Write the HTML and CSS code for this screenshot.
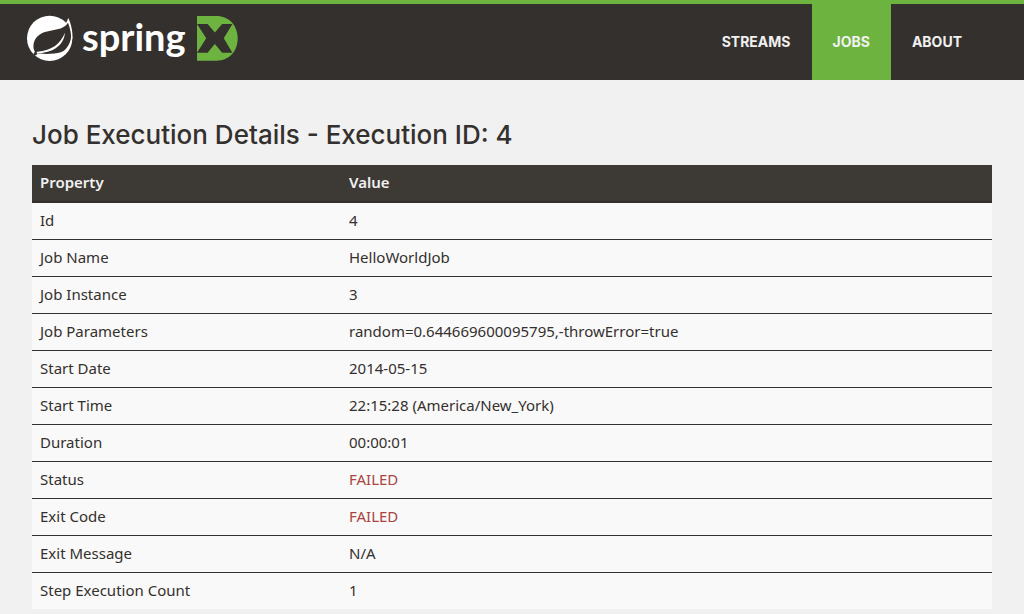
FILE: index.html
```html
<!DOCTYPE html>
<html lang="en">
<head>
<meta charset="utf-8">
<title>Spring XD - Job Execution Details</title>
<link rel="stylesheet" href="styles.css">
</head>
<body>
<header class="navbar">
  <a class="brand" href="#" aria-label="Spring XD">
    <svg class="brand-leaf" viewBox="0 0 144 144" aria-hidden="true">
      <circle class="white" cx="71" cy="73" r="68"/>
      <path class="white" d="M127 12 C134 28 141 50 139 76 L110 50 Z"/>
      <path class="dark" d="M126 26 C113 49 78 46 54 55 C28 65 18 88 24 108 C26 113 28 116 31 118 C50 121 86 121 104 115 C125 107 137 80 135 62 C133 46 130 36 126 26 Z"/>
      <path class="white" d="M117 56 C104 88 78 110 34 113 L30 118 C76 117 113 98 117 56 Z"/>
      <circle class="dark" cx="28" cy="119" r="5"/>
    </svg>
    <span class="brand-name">spring</span>
    <svg class="brand-xd" viewBox="0 0 124 136" aria-hidden="true">
      <path class="green" d="M0 0 H58 C98 0 123 30 123 68 C123 106 98 135 58 135 H0 Z"/>
      <path class="dark" d="M0 24 H32 L54 50 L76 24 H107 L81 67 L107 111 H76 L54 85 L32 111 H0 L28 67 Z"/>
    </svg>
  </a>
  <nav class="nav">
    <a href="#">STREAMS</a>
    <a class="active" href="#" aria-current="page">JOBS</a>
    <a href="#">ABOUT</a>
  </nav>
</header>
<main class="content">
  <h1>Job Execution Details - Execution ID: 4</h1>
  <table class="details">
    <thead><tr><th scope="col">Property</th><th scope="col">Value</th></tr></thead>
    <tbody>
      <tr><td>Id</td><td>4</td></tr>
      <tr><td>Job Name</td><td>HelloWorldJob</td></tr>
      <tr><td>Job Instance</td><td>3</td></tr>
      <tr><td>Job Parameters</td><td>random=0.644669600095795,-throwError=true</td></tr>
      <tr><td>Start Date</td><td>2014-05-15</td></tr>
      <tr><td>Start Time</td><td>22:15:28 (America/New_York)</td></tr>
      <tr><td>Duration</td><td>00:00:01</td></tr>
      <tr><td>Status</td><td class="failed">FAILED</td></tr>
      <tr><td>Exit Code</td><td class="failed">FAILED</td></tr>
      <tr><td>Exit Message</td><td>N/A</td></tr>
      <tr><td>Step Execution Count</td><td>1</td></tr>
    </tbody>
  </table>
</main>
</body>
</html>
```
FILE: styles.css
```css
* { box-sizing: border-box; }
body {
  margin: 0;
  background: #f1f1f1;
  color: #34302d;
  font: 15px/20px "Noto Sans", "Open Sans", sans-serif;
}
.navbar {
  display: flex;
  justify-content: space-between;
  height: 80px;
  padding: 0 41px 0 26px;
  border-top: 4px solid #6db33f;
  background: #34302d;
}
.brand {
  display: flex;
  align-items: flex-start;
  padding-top: 10px;
  color: #fff;
  text-decoration: none;
}
.brand-leaf { width: 48px; height: 48px; }
.brand-name {
  margin: 0 11px 0 8px;
  font: 700 38px/44px "Lato", sans-serif;
}
.brand-xd { width: 41px; height: 45px; margin-top: 2px; }
.white { fill: #fff; }
.dark { fill: #34302d; }
.green { fill: #6db33f; }
.nav { display: flex; }
.nav a {
  padding: 28px 21px;
  color: #f1f1f1;
  font: 700 14px/20px "Inter", sans-serif;
  text-decoration: none;
}
.nav .active { background: #6db33f; }
.content { padding: 40px 32px 4px; }
h1 {
  margin: 0 0 16px;
  font: 500 26px/29px "Inter", sans-serif;
}
.details {
  width: 100%;
  border-spacing: 0;
  background: #f9f9f9;
}
th, td {
  padding: 7px 8px 9px;
  text-align: left;
  border-bottom: 1px solid #34302d;
}
th {
  border-bottom-width: 2px;
  background: #3d3934;
  color: #f1f1f1;
  font-weight: 600;
}
th:first-child { width: 309px; }
tr:last-child td { border-bottom: 0; }
.details thead th { border-bottom: 2px solid #34302d; }
.failed { color: #a94442; }
```
